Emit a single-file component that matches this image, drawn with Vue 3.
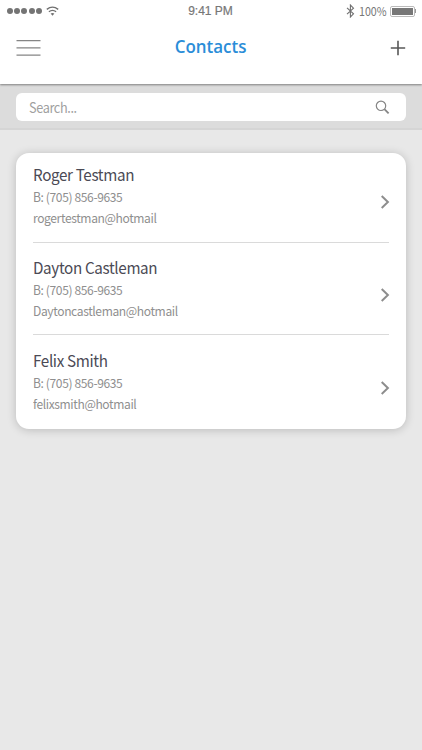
<script setup>
const contacts = [
  { name: 'Roger Testman', phone: '(705) 856-9635', email: 'rogertestman@hotmail' },
  { name: 'Dayton Castleman', phone: '(705) 856-9635', email: 'Daytoncastleman@hotmail' },
  { name: 'Felix Smith', phone: '(705) 856-9635', email: 'felixsmith@hotmail' },
]
</script>

<template>
  <div class="screen">
    <header class="header">
      <div class="status">
        <div class="signal">
          <span v-for="n in 5" :key="n" class="dot"></span>
          <svg class="wifi" width="13" height="10" viewBox="0 0 13 10" fill="none" stroke="#707070" stroke-width="1.4">
            <path d="M0.8 3.4Q6.5 -1.2 12.2 3.4" />
            <path d="M2.9 5.8Q6.5 3 10.1 5.8" />
            <path d="M4.6 7.6Q6.5 6.5 8.4 7.6L6.5 9.7Z" fill="#707070" stroke="none" />
          </svg>
        </div>
        <span class="time">9:41 PM</span>
        <div class="power">
          <svg width="9" height="14" viewBox="0 0 9 14" fill="none" stroke="#707070" stroke-width="1.1">
            <path d="M1 3.8L7.5 9.8L4.4 13V1L7.5 4.2L1 10.2" />
          </svg>
          <span class="percent">100%</span>
          <span class="battery"><span class="charge"></span></span>
          <span class="cap"></span>
        </div>
      </div>
      <div class="nav">
        <svg width="26" height="18" viewBox="0 0 26 18" stroke="#858585" stroke-width="1.2">
          <path d="M.5 1.6H24.5M.5 8.8H24.5M.5 16.2H24.5" />
        </svg>
        <h1 class="title">Contacts</h1>
        <svg width="16" height="16" viewBox="0 0 16 16" stroke="#585858" stroke-width="1.6">
          <path d="M.8 8H15.2M8 .8V15.2" />
        </svg>
      </div>
    </header>

    <div class="searchbar">
      <div class="field">
        <span class="placeholder">Search...</span>
        <svg width="15" height="15" viewBox="0 0 15 15" fill="none" stroke="#858585">
          <circle cx="6" cy="5.8" r="4.7" stroke-width="1.2" />
          <path d="M9.4 9.2L13.6 13.4" stroke-width="1.8" />
        </svg>
      </div>
    </div>

    <main class="card">
      <section v-for="c in contacts" :key="c.name" class="contact">
        <div class="info">
          <h2 class="name">{{ c.name }}</h2>
          <p class="detail">B: {{ c.phone }}</p>
          <p class="detail">{{ c.email }}</p>
        </div>
        <svg class="chevron" width="10" height="14" viewBox="0 0 10 14" fill="none" stroke="#8d8d8d" stroke-width="2">
          <path d="M1.7 1L7.9 7L1.7 13" />
        </svg>
      </section>
    </main>
  </div>
</template>

<style>
body {
  background: #e8e8e8;
}
</style>

<style scoped>
.screen {
  width: 422px;
  height: 750px;
  overflow: hidden;
  background: #e8e8e8;
  font-family: "Noto Sans CJK SC", "Noto Sans", sans-serif;
}
.header {
  position: relative;
  box-sizing: border-box;
  height: 84px;
  background: #fff;
  box-shadow: 0 1px 2px rgba(0, 0, 0, 0.42);
}
.status {
  display: grid;
  grid-template-columns: 1fr auto 1fr;
  align-items: center;
  height: 22px;
  padding: 0 6px 0 7px;
}
.signal {
  display: flex;
  align-items: center;
  gap: 1.2px;
}
.dot {
  width: 6px;
  height: 6px;
  border-radius: 50%;
  background: #747474;
}
.wifi {
  margin-left: 3.5px;
}
.time {
  margin-right: 2px;
  color: #777;
  font: 12px/22px "Liberation Sans", sans-serif;
  -webkit-text-stroke: 0.2px #777;
}
.power {
  display: flex;
  align-items: center;
  justify-content: flex-end;
}
.percent {
  margin: 0 3px 0 4px;
  width: 28px;
  color: #777;
  font-size: 12px;
  line-height: 22px;
  transform: scaleX(0.89);
  transform-origin: left;
}
.battery {
  box-sizing: border-box;
  width: 25px;
  height: 11px;
  padding: 1px;
  border: 1px solid #bbb;
  border-radius: 2px;
}
.charge {
  display: block;
  height: 7px;
  background: #777;
}
.cap {
  width: 1px;
  height: 4px;
  background: #999;
}
.nav {
  display: grid;
  grid-template-columns: 1fr auto 1fr;
  align-items: center;
  height: 52px;
  padding: 0 16px;
}
.nav svg:last-child {
  justify-self: end;
}
.title {
  margin: 0 0 2px;
  color: #2a8dd8;
  font: 600 17.3px/24px "Open Sans", sans-serif;
  transform: scaleX(0.98);
}
.searchbar {
  box-sizing: border-box;
  height: 46px;
  padding: 9px 16px 0 15.5px;
  background: #dcdcdc;
  border-bottom: 2px solid #d5d5d5;
}
.field {
  display: flex;
  align-items: center;
  justify-content: space-between;
  height: 28px;
  padding: 0 16px 0 13px;
  border-radius: 6px;
  background: #fff;
}
.placeholder {
  color: #a0a0a0;
  font-size: 13.8px;
  letter-spacing: -0.4px;
  line-height: 28px;
  transform: scaleX(0.92);
  transform-origin: left;
}
.card {
  box-sizing: border-box;
  width: 390px;
  height: 275.5px;
  margin: 23px 0 0 16px;
  padding: 0 17px;
  border-radius: 13px;
  background: #fff;
  box-shadow: 0 1px 10px rgba(0, 0, 0, 0.2);
}
.contact {
  box-sizing: border-box;
  display: flex;
  align-items: flex-start;
  justify-content: space-between;
  height: 92px;
  padding-top: 12px;
}
.contact:first-child {
  height: 89px;
  padding-top: 9px;
}
.contact + .contact {
  border-top: 1px solid #dadada;
}
.contact:last-child {
  padding-top: 13px;
}
.info {
  transform: scaleX(0.95);
  transform-origin: left;
}
.name {
  margin: 0;
  color: #4b4a55;
  font-size: 16px;
  font-weight: 400;
  letter-spacing: -0.36px;
  line-height: 24px;
}
.detail {
  margin: 0;
  color: #8f8f8f;
  font-size: 12.7px;
  letter-spacing: -0.4px;
  line-height: 21px;
}
.chevron {
  margin: 33px -1px 0 0;
}
</style>
